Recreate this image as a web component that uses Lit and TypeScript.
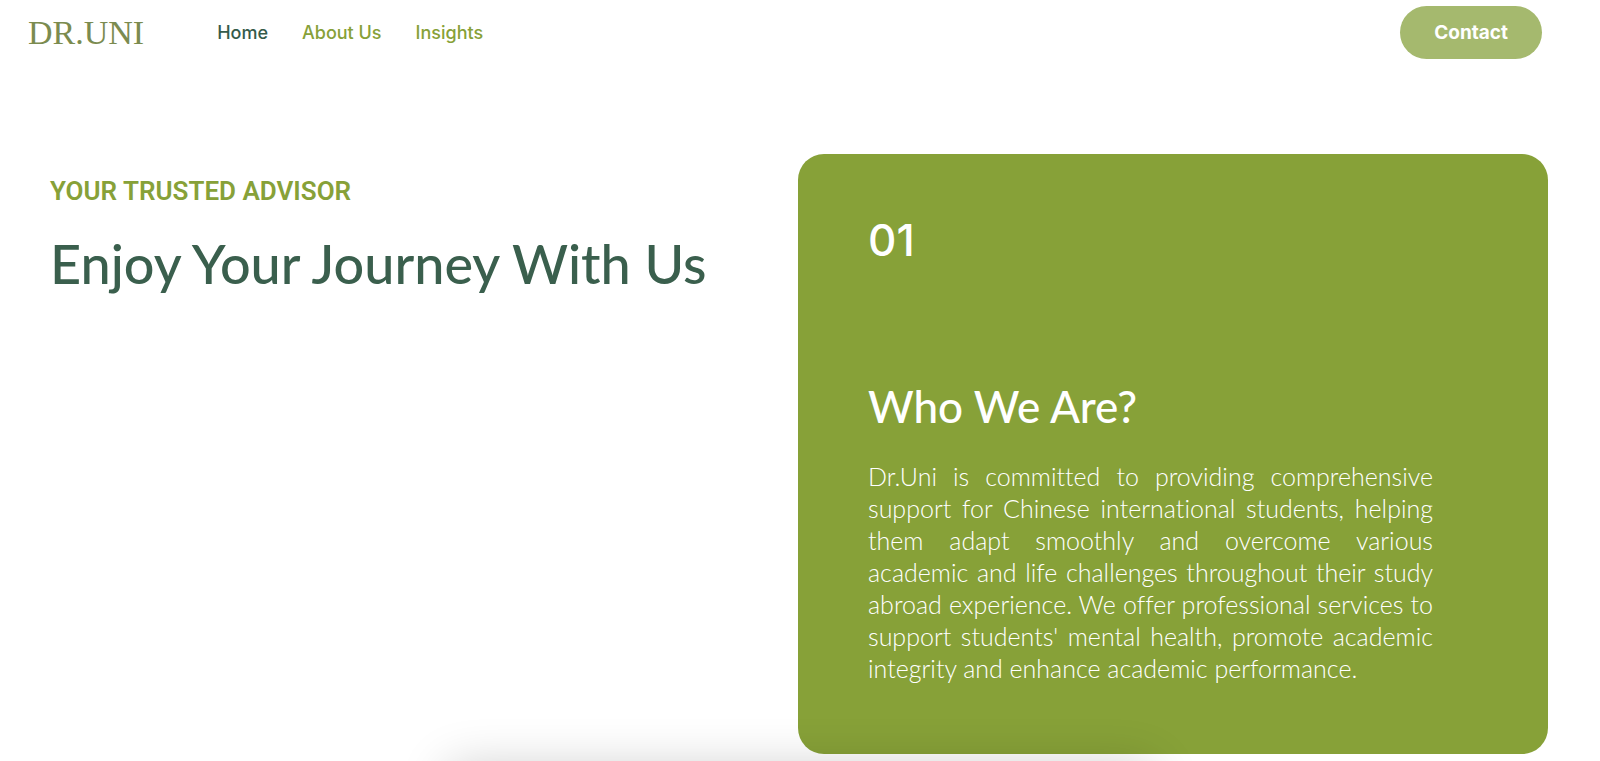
import { LitElement, html, css } from "lit";
import { customElement, state } from "lit/decorators.js";
import { classMap } from "lit/directives/class-map.js";

const LINKS = ["Home", "About Us", "Insights"];

@customElement("site-header")
class SiteHeader extends LitElement {
  @state() private current = "Home";

  static styles = css`
    :host {
      display: block;
    }
    .bar {
      display: flex;
      align-items: center;
      padding: 6px 58px 0 28px;
    }
    .logo {
      font: 400 34px/40px "Liberation Serif", serif;
      color: #7b8b4f;
      text-decoration: none;
      margin-right: 73px;
    }
    .nav {
      display: flex;
      gap: 34px;
      flex: 1;
    }
    .link {
      font: 500 18px/24px Inter, sans-serif;
      color: #87a138;
      text-decoration: none;
    }
    .current {
      color: #355b4b;
    }
    .contact {
      border: 0;
      border-radius: 27px;
      padding: 14px 34px;
      font: 700 19px/25px Inter, sans-serif;
      color: #fff;
      background: #a5b96e;
      cursor: pointer;
    }
  `;

  render() {
    return html`
      <header class="bar">
        <a class="logo" href="#">DR.UNI</a>
        <nav class="nav">
          ${LINKS.map(
            (name) => html`<a
              class=${classMap({ link: true, current: name === this.current })}
              href="#"
              @click=${() => (this.current = name)}
              >${name}</a
            >`
          )}
        </nav>
        <button class="contact" type="button">Contact</button>
      </header>
    `;
  }
}

@customElement("about-card")
class AboutCard extends LitElement {
  static styles = css`
    :host {
      display: block;
      box-sizing: border-box;
      padding: 58px 115px 70px 70px;
      border-radius: 26px;
      background: #87a138;
      color: #fff;
    }
    .number {
      margin: 0 0 110px;
      font: 500 44px/56px Inter, sans-serif;
    }
    .title {
      margin: 0 0 26px;
      font: 500 44px/56px Lato, sans-serif;
    }
    .text {
      margin: 0;
      font: 300 25px/32px Lato, sans-serif;
      font-variant-ligatures: none;
      text-align: justify;
    }
  `;

  render() {
    return html`
      <p class="number">01</p>
      <h2 class="title">Who We Are?</h2>
      <p class="text">
        Dr.Uni is committed to providing comprehensive support for Chinese
        international students, helping them adapt smoothly and overcome various
        academic and life challenges throughout their study abroad experience.
        We offer professional services to support students' mental health,
        promote academic integrity and enhance academic performance.
      </p>
    `;
  }
}

@customElement("app-root")
class AppRoot extends LitElement {
  static styles = css`
    :host {
      display: block;
      position: relative;
      overflow: hidden;
      min-height: 100vh;
      background: #fff;
    }
    .intro {
      display: grid;
      grid-template-columns: 1fr 1fr;
      padding: 95px 52px 0 48px;
    }
    .lead {
      padding: 21px 2px 0;
    }
    .eyebrow {
      margin: 0 0 25px;
      font: 600 26px/32px Roboto, sans-serif;
      color: #87a138;
    }
    .headline {
      margin: 0;
      font: 500 54px/64px Lato, sans-serif;
      color: #3a5f4d;
    }
    .shade {
      position: absolute;
      left: 28%;
      right: 28%;
      top: calc(100% + 6px);
      height: 80px;
      box-shadow: 0 0 50px rgba(0, 0, 0, 0.2);
      pointer-events: none;
    }
  `;

  render() {
    return html`
      <site-header></site-header>
      <main class="intro">
        <div class="lead">
          <p class="eyebrow">YOUR TRUSTED ADVISOR</p>
          <h1 class="headline">Enjoy Your Journey With Us</h1>
        </div>
        <about-card></about-card>
      </main>
      <div class="shade"></div>
    `;
  }
}
